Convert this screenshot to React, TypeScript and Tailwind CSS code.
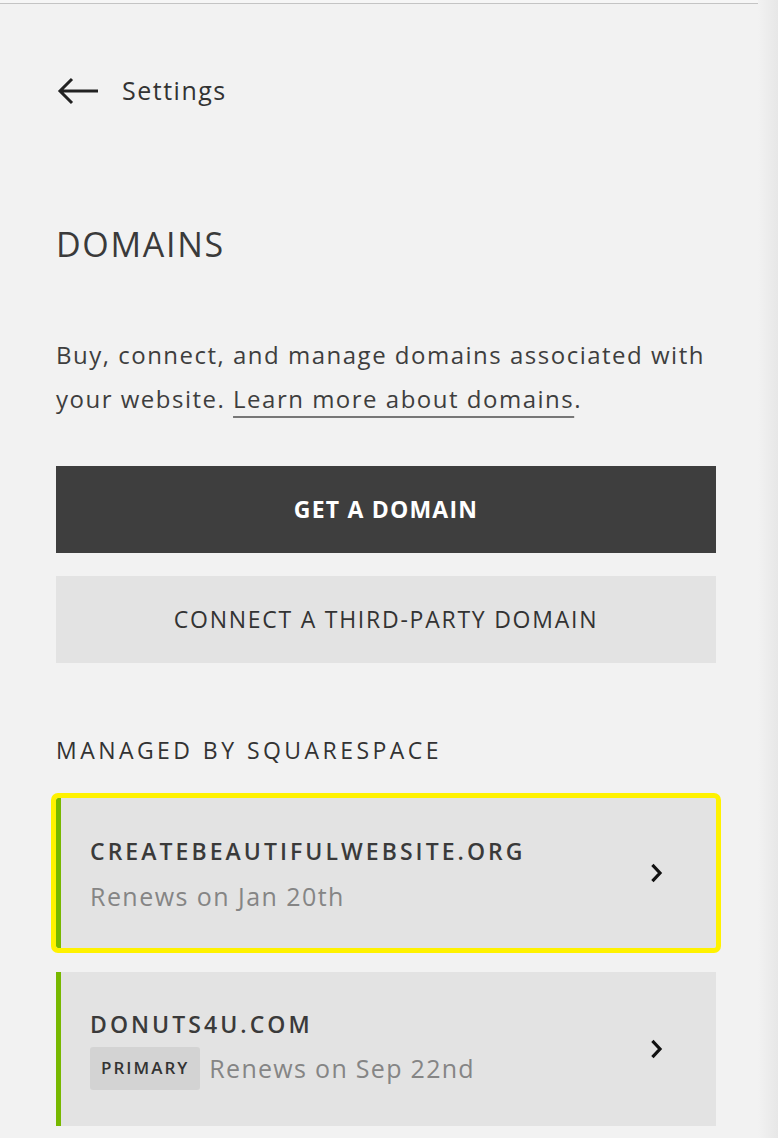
import { type ReactNode } from "react";

type DomainCardProps = {
	name: string;
	renews: string;
	primary?: boolean;
	focused?: boolean;
};

const Chevron = () => (
	<svg width="14" height="20" viewBox="0 0 14 20" fill="none" aria-hidden>
		<path d="M3.5 3 L10 10 L3.5 17" stroke="#111" strokeWidth="3.2" strokeLinecap="square" />
	</svg>
);

const DomainCard = ({ name, renews, primary, focused }: DomainCardProps) => {
	return (
		<div
			className={
				focused
					? "flex h-[150px] items-center border-l-[5px] border-[#77b800] bg-[#e3e3e3] pl-[29px] pr-[52px] outline-[5px] outline-[#fff200] rounded-[2px]"
					: "flex h-[154px] items-center border-l-[5px] border-[#77b800] bg-[#e3e3e3] pl-[29px] pr-[52px]"
			}
		>
			<div className="flex flex-1 flex-col">
				<p className="text-[23px] font-semibold leading-[30px] tracking-[3.05px] text-[#3a3a3a]">{name}</p>
				{primary ? (
					<div className="mt-[8px] flex items-center gap-[9px]">
						<span className="flex h-[43px] items-center rounded-[3px] bg-[#d3d3d3] px-[11px] text-[17px] font-semibold tracking-[2px] text-[#333]">
							PRIMARY
						</span>
						<span className="text-[25px] leading-[30px] tracking-[1.3px] text-[#858585]">{renews}</span>
					</div>
				) : (
					<p className="mt-[15px] text-[25px] leading-[30px] tracking-[1.45px] text-[#858585]">{renews}</p>
				)}
			</div>
			<Chevron />
		</div>
	);
};

const Button = ({ dark, children }: { dark?: boolean; children: ReactNode }) => (
	<button
		className={
			dark
				? "flex h-[87px] w-full items-center justify-center bg-[#3e3e3e] text-[23px] font-bold tracking-[1.2px] text-white"
				: "flex h-[87px] w-full items-center justify-center bg-[#e3e3e3] text-[23px] tracking-[1.75px] text-[#333]"
		}
	>
		{children}
	</button>
);

export default function App() {
	return (
		<div className="flex min-h-[1138px] w-[778px] bg-[#f2f2f2] font-['Open_Sans',sans-serif]">
			<div className="flex-1">
				<div className="h-[3px] bg-[#f6f6f6]" />
				<div className="h-px bg-[#c4c4c4]" />
				<div className="ml-[56px] w-[660px]">
					<div className="mt-[67px] flex h-[40px] items-center gap-[24px]">
						<svg width="42" height="30" viewBox="0 0 42 30" fill="none" aria-hidden>
							<path d="M42 15 H4 M16 3 L4 15 L16 27" stroke="#222" strokeWidth="3" />
						</svg>
						<span className="text-[25px] tracking-[1.5px] text-[#333]">Settings</span>
					</div>

					<h1 className="mt-[113px] text-[34px] leading-[40px] tracking-[1.7px] text-[#3a3a3a]">DOMAINS</h1>

					<p className="mt-[69px] text-[24px] leading-[44px] tracking-[1.5px] text-[#3e3e3e]">
						Buy, connect, and manage domains associated with your website.{" "}
						<a className="underline decoration-[#777] decoration-2 underline-offset-[8px]">Learn more about domains</a>.
					</p>

					<div className="mt-[45px]">
						<Button dark>GET A DOMAIN</Button>
					</div>
					<div className="mt-[23px]">
						<Button>CONNECT A THIRD-PARTY DOMAIN</Button>
					</div>

					<h2 className="mt-[72px] text-[23px] leading-[30px] tracking-[3.45px] text-[#333]">
						MANAGED BY SQUARESPACE
					</h2>

					<div className="mt-[33px]">
						<DomainCard name="CREATEBEAUTIFULWEBSITE.ORG" renews="Renews on Jan 20th" focused />
					</div>
					<div className="mt-[24px]">
						<DomainCard name="DONUTS4U.COM" renews="Renews on Sep 22nd" primary />
					</div>
				</div>
			</div>
			<div className="w-[20px] bg-gradient-to-r from-[#f2f2f2] to-[#e7e7e7]" />
		</div>
	);
}
